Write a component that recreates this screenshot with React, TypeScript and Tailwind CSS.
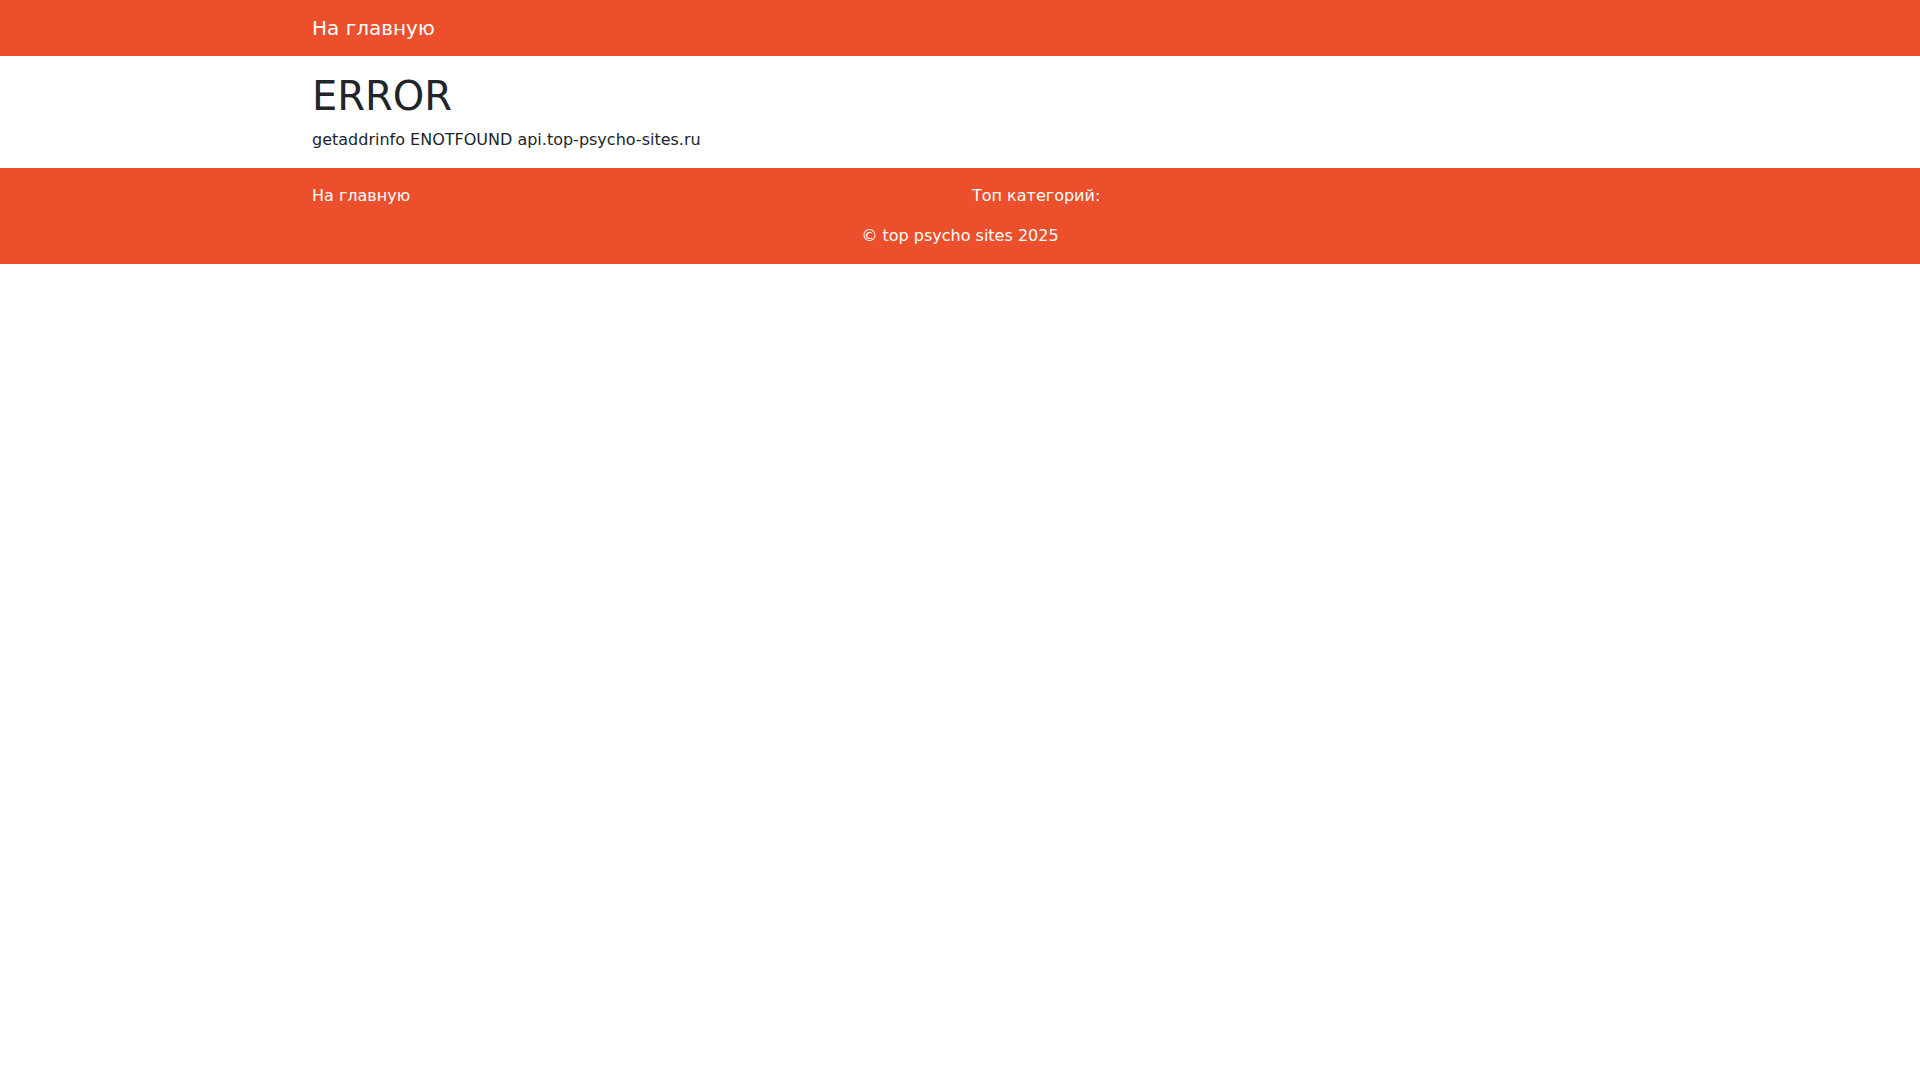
export default function App() {
  return (
    <div className="min-h-screen bg-white text-[#212529] font-['DejaVu_Sans',sans-serif]">
      {/* Top bar */}
      <header className="bg-[#eb4f2c] py-2">
        <div className="max-w-[1320px] mx-auto px-3">
          <a href="#" className="inline-block py-[5px] text-[20px] leading-[30px] text-white">
            На главную
          </a>
        </div>
      </header>

      <main className="max-w-[1320px] mx-auto px-3 pt-4">
        <h1 className="text-[40px] leading-[48px] font-medium mb-2">ERROR</h1>
        <p className="text-base leading-6 mb-4">getaddrinfo ENOTFOUND api.top-psycho-sites.ru</p>
      </main>

      <footer className="bg-[#eb4f2c] py-4 text-white">
        <div className="max-w-[1320px] mx-auto px-3">
          <div className="grid grid-cols-2 gap-6 text-base leading-6">
            <div>
              <a href="#" className="text-white">На главную</a>
            </div>
            <div>Топ категорий:</div>
          </div>
          <div className="mt-4 text-center text-base leading-6">© top psycho sites 2025</div>
        </div>
      </footer>
    </div>
  );
}
